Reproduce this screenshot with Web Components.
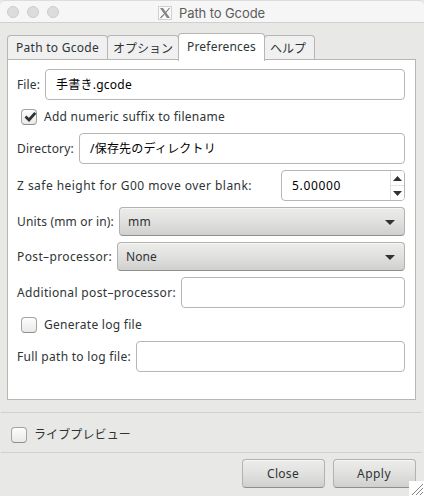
<!DOCTYPE html>
<html lang="ja">
<head>
<meta charset="utf-8">
<title>Path to Gcode</title>
<style>
body{margin:0;width:424px;height:496px;overflow:hidden;background:#e8e8e6}
</style>
</head>
<body>
<gcode-dialog></gcode-dialog>
<script>
class Base extends HTMLElement {
  connectedCallback() {
    if (this.shadowRoot) return;
    this.attachShadow({ mode: 'open' }).innerHTML = this.render();
    if (this.ready) this.ready();
  }
  attr(n, d = '') { return this.getAttribute(n) ?? d; }
}

// Single line of text whose tracking is adjusted to fill a given advance width.
customElements.define('fit-text', class extends Base {
  render() {
    return `<style>:host{display:block;flex:none;width:${this.attr('w')}px;white-space:pre;line-height:18px}
      span{display:inline-block}</style><span>${this.attr('text')}</span>`;
  }
  ready() {
    const s = this.shadowRoot.querySelector('span');
    const n = [...this.attr('text')].length;
    s.style.letterSpacing = (this.attr('w') - s.getBoundingClientRect().width) / n + 'px';
    s.style.fontVariantLigatures = 'none';
  }
});

customElements.define('title-bar', class extends Base {
  render() {
    return `<style>
      :host{display:flex;box-sizing:border-box;height:23px;padding:3px 0 0 7px;background:#f6f6f6;border-top:1px solid #dcdcdc;border-bottom:1px solid #d0d0d0;border-radius:5px 5px 0 0;font:13px Inter,sans-serif;color:#5c5c5c}
      i{flex:none;box-sizing:border-box;width:12px;height:12px;margin:2px 8px 0 0;border-radius:50%;background:#dcdcdc;border:1px solid #cdcdcd}
      svg{flex:none;margin:2px 7px 0 91px}
    </style><i></i><i></i><i></i>
    <svg width="14" height="14" viewBox="0 0 14 14"><rect x=".5" y=".5" width="13" height="13" fill="#fafafa" stroke="#d0d0d0"/><path d="M2 2h3l7 10H9z" fill="#858585"/><path d="M11.5 2 7.8 6.5M6 8.3 2.5 12" stroke="#777" stroke-width="1.1"/></svg>
    <fit-text w="86" text="Path to Gcode"></fit-text>`;
  }
});

customElements.define('tab-item', class extends Base {
  render() {
    return `<style>
      :host{display:block;box-sizing:border-box;height:24px;margin-right:-1px;padding:3px 9px 0 8px;width:${this.attr('box')}px;border:1px solid #b6b6b3;border-bottom:0;border-radius:4px 4px 0 0;background:#f0f0f0}
      :host([active]){height:28px;margin-bottom:-2px;padding-top:4px;background:#fff;position:relative}
    </style><fit-text w="${this.attr('w')}" text="${this.attr('text')}"></fit-text>`;
  }
});

customElements.define('form-row', class extends Base {
  render() {
    return `<style>
      :host{display:flex;align-items:center;height:${this.attr('h', 31)}px}
      fit-text{margin-right:${this.attr('gap', 6)}px}
    </style><fit-text w="${this.attr('w')}" text="${this.attr('label')}"></fit-text><slot></slot>`;
  }
});

customElements.define('text-entry', class extends Base {
  render() {
    return `<style>
      :host{display:flex;align-items:center;box-sizing:border-box;flex:1;height:31px;padding-left:10px;border:1px solid #b6b6b3;border-radius:4px;background:#fff;color:#000}
    </style>${this.attr('text') ? `<fit-text w="${this.attr('w')}" text="${this.attr('text')}"></fit-text>` : ''}`;
  }
});

customElements.define('spin-entry', class extends Base {
  render() {
    return `<style>
      :host{display:flex;align-items:center;justify-content:space-between;box-sizing:border-box;flex:1;height:31px;padding-left:10px;border:1px solid #b6b6b3;border-radius:4px;color:#000;overflow:hidden}
      div{display:grid;grid-template-rows:14px 14px;gap:1px;width:13px;height:29px;background:#e2e2e0;border-left:1px solid #e2e2e0}
      b{display:grid;place-items:center;background:#fff}
    </style><fit-text w="49" text="5.00000"></fit-text>
    <div><b><svg width="9" height="5"><path d="M0 5 4.500 0 9 5z" fill="#2e3436"/></svg></b>
    <b><svg width="9" height="5"><path d="M0 0h9L4.500 5z" fill="#2e3436"/></svg></b></div>`;
  }
});

const raised = 'border:1px solid #b2b2ae;border-bottom-color:#8f8f8a;border-radius:4px;background:linear-gradient(#ececeb,#e2e2e0 45%,#d0d0ce);box-shadow:inset 0 1px #f6f6f5';

customElements.define('combo-box', class extends Base {
  render() {
    return `<style>
      :host{display:flex;align-items:center;justify-content:space-between;box-sizing:border-box;flex:1;height:29px;padding:0 9px 0 8px;${raised}}
      svg{margin-top:1px}
    </style><fit-text w="${this.attr('w')}" text="${this.attr('text')}"></fit-text>
    <svg width="10" height="5"><path d="M0 0h10L5 5z" fill="#2e3436"/></svg>`;
  }
});

customElements.define('push-button', class extends Base {
  render() {
    return `<style>
      :host{display:flex;align-items:center;justify-content:center;box-sizing:border-box;width:83px;height:29px;padding-right:1px;${raised}}
    </style><fit-text w="${this.attr('w')}" text="${this.attr('text')}"></fit-text>`;
  }
});

customElements.define('check-item', class extends Base {
  render() {
    return `<style>
      :host{display:flex;align-items:center;height:21px;padding-left:4px}
      i{flex:none;display:block;box-sizing:border-box;width:16px;height:16px;margin:1px 7px 0 0;border:1px solid #a3a39f;border-bottom-color:#8f8f8a;border-radius:4px;background:linear-gradient(#fdfdfd,#e9e9e8)}
      svg{display:block;overflow:visible}
    </style><i>${this.hasAttribute('checked') ? '<svg width="14" height="14"><path d="M3.500 6.500 7 10 13.300 2.800" fill="none" stroke="#2e3436" stroke-width="2.800"/></svg>' : ''}</i>
    <fit-text w="${this.attr('w')}" text="${this.attr('text')}"></fit-text>`;
  }
});

customElements.define('resize-grip', class extends Base {
  render() {
    return `<style>:host{position:absolute;right:0;bottom:0}svg{display:block}</style>
    <svg width="15" height="15"><path d="M0 0h15v15H0z" fill="#fff"/><path d="M3 14 14 3M7 14l7-7M11 14l3-3" stroke="#858585"/></svg>`;
  }
});

customElements.define('gcode-dialog', class extends Base {
  render() {
    return `<style>
      :host{display:flex;flex-direction:column;position:relative;width:424px;height:496px;background:#e8e8e6;color:#2e3436;font:12px "Noto Sans","Noto Sans CJK JP",sans-serif}
      nav{display:flex;align-items:flex-end;height:36px;padding-left:7px}
      main{display:flex;flex-direction:column;gap:6px;box-sizing:border-box;height:341px;margin:0 8px 12px 7px;padding:9px 10px 0 9px;background:#fff;border:1px solid #b6b6b3}
      section{box-sizing:border-box;height:41px;margin:0 2px 0 1px;padding:11px 0 0 6px;border:solid #d0d0ce;border-width:1px 0}
      footer{display:flex;justify-content:flex-end;gap:8px;padding:6px 8px 0}
    </style>
    <title-bar></title-bar>
    <nav>
      <tab-item box="101" w="83" text="Path to Gcode"></tab-item>
      <tab-item box="72" w="60" text="オプション" style="padding:4px 0 0 5px"></tab-item>
      <tab-item active box="87" w="69" text="Preferences"></tab-item>
      <tab-item box="51" w="36" text="ヘルプ" style="padding:4px 0 0 5px"></tab-item>
    </nav>
    <main>
      <form-row w="23" gap="5" label="File:"><text-entry w="76" text="手書き.gcode"></text-entry></form-row>
      <check-item checked w="181" text="Add numeric suffix to filename"></check-item>
      <form-row w="57" gap="5" label="Directory:"><text-entry w="126" text="/保存先のディレクトリ"></text-entry></form-row>
      <form-row w="235" gap="29" label="Z safe height for G00 move over blank:"><spin-entry></spin-entry></form-row>
      <form-row h="29" w="97" gap="5" label="Units (mm or in):"><combo-box w="23" text="mm"></combo-box></form-row>
      <form-row h="29" w="95" gap="5" label="Post–processor:"><combo-box w="31" text="None"></combo-box></form-row>
      <form-row w="159" gap="5" label="Additional post–processor:"><text-entry></text-entry></form-row>
      <check-item w="98" text="Generate log file"></check-item>
      <form-row w="114" gap="5" label="Full path to log file:"><text-entry></text-entry></form-row>
    </main>
    <section><check-item w="97" text="ライブプレビュー"></check-item></section>
    <footer><push-button w="32" text="Close"></push-button><push-button w="34" text="Apply"></push-button></footer>
    <resize-grip></resize-grip>`;
  }
});
</script>
</body>
</html>
